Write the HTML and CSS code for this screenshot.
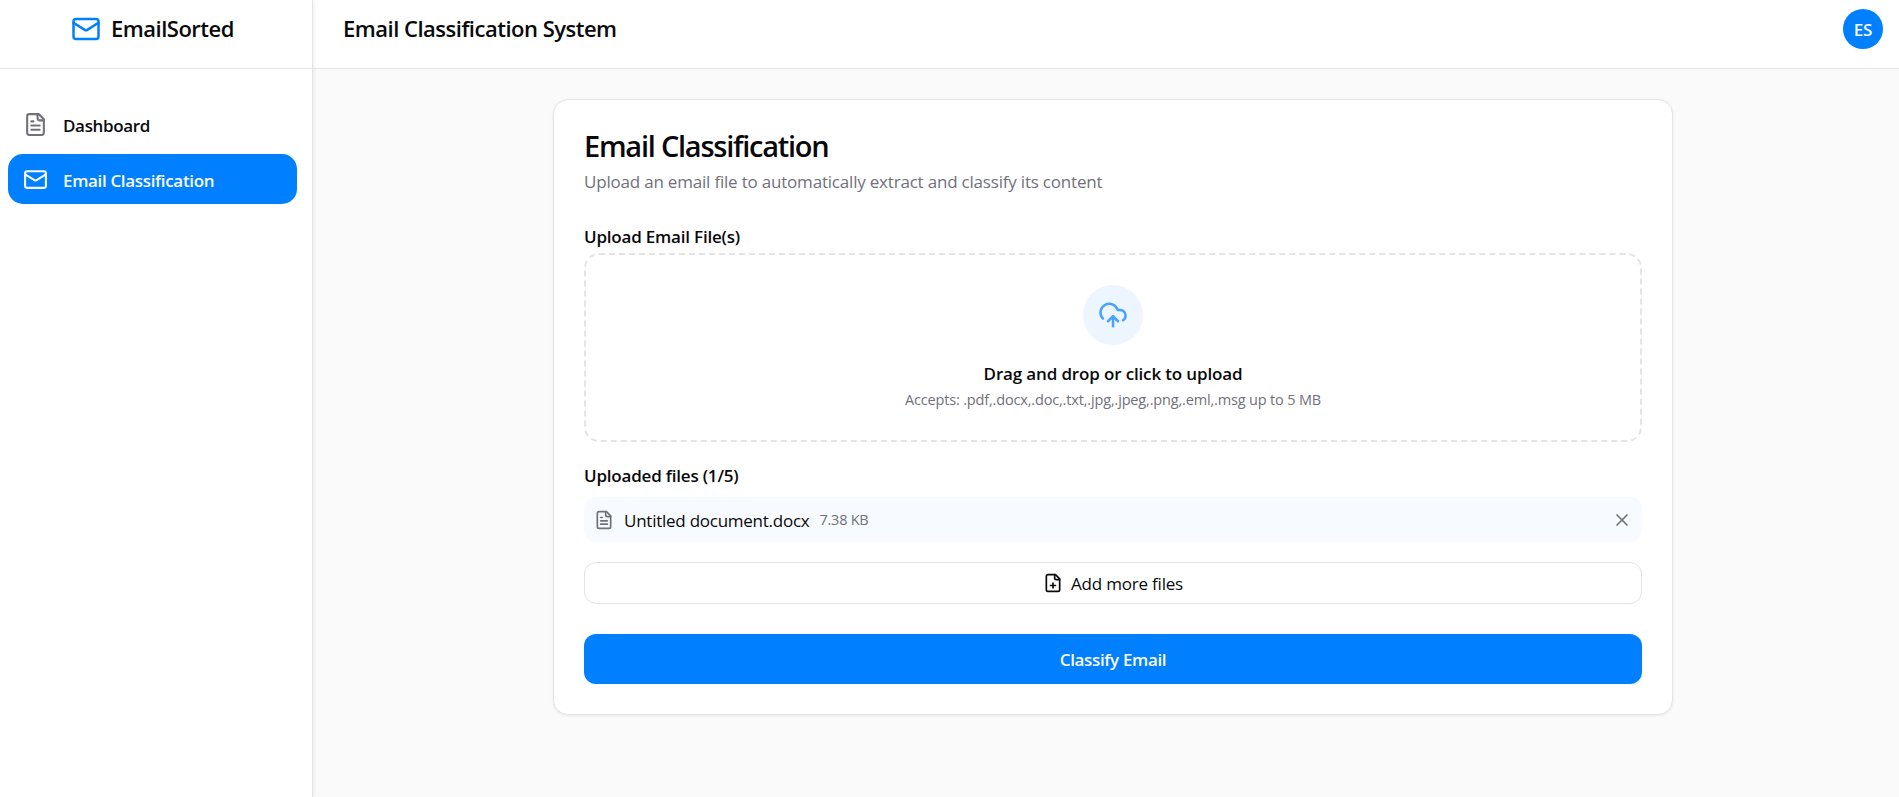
FILE: index.html
```html
<!DOCTYPE html>
<html lang="en">
<head>
<meta charset="utf-8">
<title>EmailSorted</title>
<link rel="stylesheet" href="styles.css">
</head>
<body>
<div class="app">
  <aside class="sidebar">
    <div class="brand">
      <svg class="icon icon-lg brand-icon" viewBox="0 0 24 24"><rect width="20" height="16" x="2" y="4" rx="2"/><path d="m22 7-8.97 5.7a1.94 1.94 0 0 1-2.06 0L2 7"/></svg>
      <span class="brand-name">EmailSorted</span>
    </div>
    <nav class="nav">
      <a class="nav-item">
        <svg class="icon icon-md" viewBox="0 0 24 24"><path d="M15 2H6a2 2 0 0 0-2 2v16a2 2 0 0 0 2 2h12a2 2 0 0 0 2-2V7Z"/><path d="M14 2v4a2 2 0 0 0 2 2h4"/><path d="M10 9H8"/><path d="M16 13H8"/><path d="M16 17H8"/></svg>
        <span>Dashboard</span>
      </a>
      <a class="nav-item active">
        <svg class="icon icon-md" viewBox="0 0 24 24"><rect width="20" height="16" x="2" y="4" rx="2"/><path d="m22 7-8.97 5.7a1.94 1.94 0 0 1-2.06 0L2 7"/></svg>
        <span>Email Classification</span>
      </a>
    </nav>
  </aside>
  <div class="page">
    <header class="topbar">
      <h1 class="topbar-title">Email Classification System</h1>
      <div class="avatar">ES</div>
    </header>
    <main class="content">
      <section class="card">
        <h2 class="card-title">Email Classification</h2>
        <p class="card-desc">Upload an email file to automatically extract and classify its content</p>
        <div class="label upload-label">Upload Email File(s)</div>
        <div class="dropzone">
          <div class="drop-badge">
            <svg class="icon icon-lg" viewBox="0 0 24 24"><path d="M12 13v8"/><path d="M4 14.899A7 7 0 1 1 15.71 8h1.79a4.5 4.5 0 0 1 2.5 8.242"/><path d="m8 17 4-4 4 4"/></svg>
          </div>
          <p class="drop-title">Drag and drop or click to upload</p>
          <p class="drop-hint">Accepts: .pdf,.docx,.doc,.txt,.jpg,.jpeg,.png,.eml,.msg up to 5 MB</p>
        </div>
        <div class="label files-label">Uploaded files (1/5)</div>
        <div class="file-row">
          <svg class="icon icon-sm" viewBox="0 0 24 24"><path d="M15 2H6a2 2 0 0 0-2 2v16a2 2 0 0 0 2 2h12a2 2 0 0 0 2-2V7Z"/><path d="M14 2v4a2 2 0 0 0 2 2h4"/><path d="M10 9H8"/><path d="M16 13H8"/><path d="M16 17H8"/></svg>
          <span class="file-name">Untitled document.docx</span>
          <span class="file-size">7.38 KB</span>
          <svg class="icon icon-sm file-remove" viewBox="0 0 24 24"><path d="M18 6 6 18"/><path d="m6 6 12 12"/></svg>
        </div>
        <button class="btn-outline">
          <svg class="icon icon-sm" viewBox="0 0 24 24"><path d="M15 2H6a2 2 0 0 0-2 2v16a2 2 0 0 0 2 2h12a2 2 0 0 0 2-2V7Z"/><path d="M14 2v4a2 2 0 0 0 2 2h4"/><path d="M9 15h6"/><path d="M12 18v-6"/></svg>
          <span>Add more files</span>
        </button>
        <button class="btn-primary">Classify Email</button>
      </section>
    </main>
  </div>
</div>
</body>
</html>
```
FILE: styles.css
```css
* { box-sizing: border-box; margin: 0; padding: 0; }
body {
  font-family: "Open Sans", "Noto Sans", sans-serif;
  font-size: 17px;
  letter-spacing: -.2px;
  color: #09090b;
  background: #fafafa;
}
.app { display: flex; height: 797px; overflow: hidden; }
.icon { fill: none; stroke: currentColor; stroke-width: 2; stroke-linecap: round; stroke-linejoin: round; flex: none; }
.icon-lg { width: 30px; height: 30px; }
.icon-md { width: 25px; height: 25px; }
.icon-sm { width: 20px; height: 20px; }

.sidebar {
  width: 313px;
  flex: none;
  background: #fff;
  border-right: 1px solid #e4e4e7;
  box-shadow: 0 1px 4px rgba(0, 0, 0, .1);
  z-index: 1;
}
.brand {
  height: 69px;
  padding: 0 7px 10px 0;
  display: flex;
  align-items: center;
  justify-content: center;
  gap: 10px;
  border-bottom: 1px solid #e4e4e7;
}
.brand-icon { color: #0080ff; }
.brand-name, .topbar-title { font-size: 22px; font-weight: 600; line-height: 30px; letter-spacing: -.5px; padding-bottom: 2px; }
.nav { padding: 30px 15px 0 8px; display: flex; flex-direction: column; gap: 5px; }
.nav-item {
  height: 50px;
  padding: 0 15px;
  display: flex;
  align-items: center;
  gap: 15px;
  border-radius: 15px;
  font-weight: 600;
  letter-spacing: -.34px;
}
.nav-item span { padding-top: 2px; }
.nav-item .icon { color: #71717a; }
.nav-item.active { background: #0080ff; color: #fafafa; }
.nav-item.active .icon { color: #fafafa; }

.page { flex: 1; min-width: 0; }
.topbar {
  height: 69px;
  padding: 0 16px 10px 30px;
  display: flex;
  align-items: center;
  justify-content: space-between;
  background: #fff;
  border-bottom: 1px solid #e4e4e7;
}
.avatar {
  width: 40px;
  height: 40px;
  border-radius: 50%;
  display: flex;
  align-items: center;
  justify-content: center;
  background: #0080ff;
  color: #fafafa;
  font-size: 17px;
  font-weight: 600;
}
.content { padding: 30px 0 0 14px; }
.card {
  width: 1120px;
  height: 616px;
  margin: 0 auto;
  padding: 28px 30px;
  display: flex;
  flex-direction: column;
  background: #fff;
  border: 1px solid #e4e4e7;
  border-radius: 15px;
  box-shadow: 0 1px 3px rgba(0, 0, 0, .08);
}
.card-title { font-size: 29px; font-weight: 600; line-height: 36px; letter-spacing: -1.25px; }
.card-desc { font-size: 17px; line-height: 25px; margin-top: 5px; color: #71717a; }
.label { font-weight: 600; line-height: 25px; }
.upload-label { margin-top: 30px; }
.dropzone {
  height: 189px;
  margin-top: 4px;
  padding-top: 30px;
  border: 2px dashed #e4e4e7;
  border-radius: 15px;
  display: flex;
  flex-direction: column;
  align-items: center;
  flex: none;
}
.drop-badge {
  width: 60px;
  height: 60px;
  border-radius: 50%;
  background: #edf6ff;
  color: #47a3ff;
  display: flex;
  align-items: center;
  justify-content: center;
}
.drop-title { font-weight: 600; line-height: 25px; margin-top: 16px; letter-spacing: -.15px; }
.drop-hint { font-size: 14.5px; line-height: 20px; margin-top: 4px; letter-spacing: -.16px; color: #71717a; }
.files-label { margin-top: 21px; }
.file-row {
  height: 45px;
  margin-top: 9px;
  padding: 0 10px;
  display: flex;
  align-items: center;
  gap: 10px;
  border-radius: 12px;
  background: #f7fbff;
  flex: none;
}
.file-row .icon, .file-size { color: #71717a; }
.file-name { letter-spacing: -.25px; padding-top: 2px; }
.file-size { font-size: 14.5px; letter-spacing: -.25px; }
.file-row .file-remove { margin-left: auto; }
.btn-outline, .btn-primary {
  font: inherit;
  letter-spacing: inherit;
  color: inherit;
  display: flex;
  align-items: center;
  justify-content: center;
  border-radius: 12px;
  flex: none;
}
.btn-outline { height: 42px; margin-top: 20px; gap: 8px; background: #fff; border: 1px solid #e4e4e7; }
.btn-outline span { padding-top: 1px; }
.btn-primary { height: 50px; margin-top: 30px; padding-top: 1px; background: #0080ff; color: #fafafa; border: 0; font-weight: 600; letter-spacing: -.35px; }
```
